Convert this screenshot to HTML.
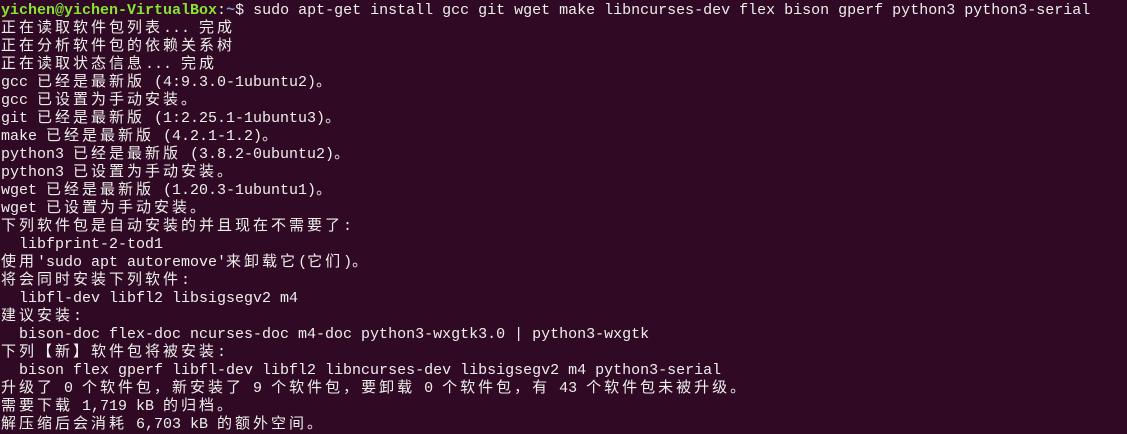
<!DOCTYPE html>
<html><head><meta charset="utf-8"><style>
html,body{margin:0;padding:0;background:#300a24;width:1127px;height:434px;overflow:hidden}
.t{position:relative;font-family:"Liberation Mono","Noto Sans CJK SC",monospace;font-size:15px;color:#eeeeec}
.t div{position:absolute;left:1px;height:18px;line-height:18px;white-space:pre}
.g{color:#8ae234;font-weight:bold}.b{color:#729fcf;font-weight:bold}
.c{letter-spacing:3px;line-height:1}
</style></head><body><div class="t">
<div style="top:2px"><span class="g">yichen@yichen-VirtualBox</span>:<span class="b">~</span>$ sudo apt-get install gcc git wget make libncurses-dev flex bison gperf python3 python3-serial</div>
<div style="top:20px"><span class="c">正在读取软件包列表</span>... <span class="c">完成</span></div>
<div style="top:38px"><span class="c">正在分析软件包的依赖关系树</span></div>
<div style="top:56px"><span class="c">正在读取状态信息</span>... <span class="c">完成</span></div>
<div style="top:74px">gcc <span class="c">已经是最新版</span> (4:9.3.0-1ubuntu2)<span class="c">。</span></div>
<div style="top:92px">gcc <span class="c">已设置为手动安装。</span></div>
<div style="top:110px">git <span class="c">已经是最新版</span> (1:2.25.1-1ubuntu3)<span class="c">。</span></div>
<div style="top:128px">make <span class="c">已经是最新版</span> (4.2.1-1.2)<span class="c">。</span></div>
<div style="top:146px">python3 <span class="c">已经是最新版</span> (3.8.2-0ubuntu2)<span class="c">。</span></div>
<div style="top:164px">python3 <span class="c">已设置为手动安装。</span></div>
<div style="top:182px">wget <span class="c">已经是最新版</span> (1.20.3-1ubuntu1)<span class="c">。</span></div>
<div style="top:200px">wget <span class="c">已设置为手动安装。</span></div>
<div style="top:218px"><span class="c">下列软件包是自动安装的并且现在不需要了</span>:</div>
<div style="top:236px">  libfprint-2-tod1</div>
<div style="top:254px"><span class="c">使用</span>'sudo apt autoremove'<span class="c">来卸载它</span>(<span class="c">它们</span>)<span class="c">。</span></div>
<div style="top:272px"><span class="c">将会同时安装下列软件</span>:</div>
<div style="top:290px">  libfl-dev libfl2 libsigsegv2 m4</div>
<div style="top:308px"><span class="c">建议安装</span>:</div>
<div style="top:326px">  bison-doc flex-doc ncurses-doc m4-doc python3-wxgtk3.0 | python3-wxgtk</div>
<div style="top:344px"><span class="c">下列【新】软件包将被安装</span>:</div>
<div style="top:362px">  bison flex gperf libfl-dev libfl2 libncurses-dev libsigsegv2 m4 python3-serial</div>
<div style="top:380px"><span class="c">升级了</span> 0 <span class="c">个软件包，新安装了</span> 9 <span class="c">个软件包，要卸载</span> 0 <span class="c">个软件包，有</span> 43 <span class="c">个软件包未被升级。</span></div>
<div style="top:398px"><span class="c">需要下载</span> 1,719 kB <span class="c">的归档。</span></div>
<div style="top:416px"><span class="c">解压缩后会消耗</span> 6,703 kB <span class="c">的额外空间。</span></div>
</div></body></html>
